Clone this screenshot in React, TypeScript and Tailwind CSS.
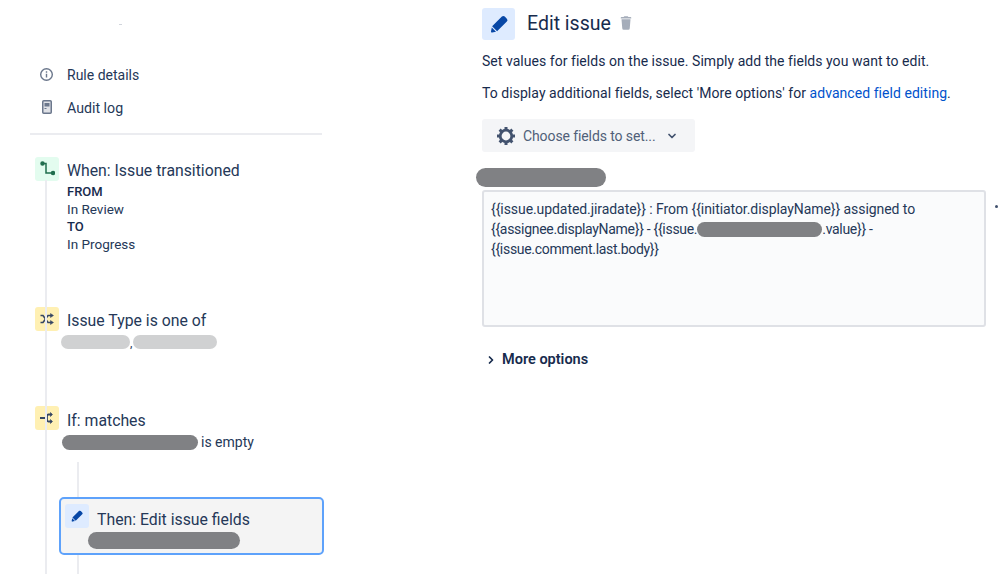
import { ChevronDown, ChevronRight } from "lucide-react";

const font = "font-['Roboto','Noto_Sans',sans-serif]";

function Pencil({ size }: { size: number }) {
  return (
    <svg width={size} height={size} viewBox="0 0 24 24" fill="#0747a6">
      <path d="M4.02 19.23a1 1 0 001.18 1.18l3.81-.78-4.21-4.21-.78 3.81zM19.844 6.707l-2.12-2.122A1.997 1.997 0 0016.308 4c-.512 0-1.024.195-1.415.585l-9.757 9.758 4.95 4.95 9.757-9.758a2 2 0 000-2.828z" />
    </svg>
  );
}

function Trash() {
  return (
    <svg width="18" height="18" viewBox="0 0 24 24" fill="#a5adba">
      <path d="M5 5a1 1 0 0 1 1-1h3a1 1 0 0 1 1-1h4a1 1 0 0 1 1 1h3a1 1 0 0 1 1 1v1H5V5zm1 2h12l-1 12a2 2 0 0 1-2 2H9a2 2 0 0 1-2-2L6 7z" />
    </svg>
  );
}

function Gear() {
  const teeth = [0, 45, 90, 135];
  return (
    <svg width="20" height="20" viewBox="0 0 20 20" fill="none" stroke="#42526e">
      <circle cx="10" cy="10" r="5.8" strokeWidth="2.8" />
      {teeth.map((a) => (
        <path key={a} d="M10 1v18" strokeWidth="3" transform={`rotate(${a} 10 10)`} strokeDasharray="3 12 3" />
      ))}
    </svg>
  );
}

function Redact({ className }: { className: string }) {
  return <span className={`inline-block rounded-full align-middle ${className}`} />;
}

function StepIcon({ bg, children }: { bg: string; children: React.ReactNode }) {
  return (
    <div className={`flex h-6 w-6 shrink-0 items-center justify-center rounded-[3px] ${bg}`}>
      {children}
    </div>
  );
}

export default function App() {
  return (
    <div className={`flex h-[584px] w-[998px] overflow-hidden bg-white text-[#253858] ${font}`}>
      {/* Left rail */}
      <div className="w-[482px] shrink-0 pl-[30px]">
        <div className="ml-[89px] mt-6 h-px w-[3px] bg-gray-300" />
        <div className="mt-[37px] flex h-6 items-center gap-[13px] pl-[9px] text-[14px]">
          <svg width="15" height="15" viewBox="0 0 16 16" fill="none" stroke="#6b778c" strokeWidth="1.5">
            <circle cx="8" cy="8" r="6.2" />
            <path d="M8 7.2v4M8 4.4v1.6" />
          </svg>
          <span className="pt-[2px]">Rule details</span>
        </div>
        <div className="mt-[9px] flex h-6 items-center gap-[15px] pl-[12px] text-[14.2px]">
          <svg width="10" height="14" viewBox="0 0 10 14">
            <rect x="0.75" y="0.75" width="8.5" height="12.5" rx="1" fill="#dfe1e6" stroke="#6b778c" strokeWidth="1.5" />
            <path d="M2.5 3h5v3.5h-5zM2.5 8h2v1h-2z" fill="#6b778c" />
          </svg>
          <span className="pt-[4px]">Audit log</span>
        </div>
        <div className="mt-[14px] h-[2px] w-[292px] bg-[#ebecf0]" />

        {/* Timeline */}
        <div className="relative mt-[22px] h-[417px]">
          <div className="flex pl-[5px]">
            <StepIcon bg="bg-[#e3fcef]">
              <svg width="16" height="16" viewBox="0 0 16 16" fill="none" stroke="#216e4e" strokeWidth="1.5">
                <path d="M3.5 2.5H7v9.5h7" />
                <circle cx="3.5" cy="2.5" r="1.5" fill="#216e4e" />
                <circle cx="14" cy="12" r="1.5" fill="#216e4e" />
              </svg>
            </StepIcon>
            <div className="pl-2 pt-[2px]">
              <div className="text-[15.8px] leading-6">When: Issue transitioned</div>
              <div className="text-[13.5px] leading-[17.5px]">
                <div className="text-[13px] font-medium text-[#172b4d]">FROM</div>
                <div>In Review</div>
                <div className="text-[13px] font-medium text-[#172b4d]">TO</div>
                <div>In Progress</div>
              </div>
            </div>
          </div>

          <div className="mt-[54px] flex pl-[5px]">
            <StepIcon bg="bg-[#fff0b3]">
              <svg width="16" height="16" viewBox="0 0 16 16" fill="none" stroke="#344563" strokeWidth="1.6">
                <path d="M1.5 4.5h2.5l5 7h3M1.5 11.5h2.5l5-7h3" />
                <path d="M11.5 2.5l3 2-3 2zM11.5 9.5l3 2-3 2z" fill="#344563" strokeWidth="0.5" />
              </svg>
            </StepIcon>
            <div className="pl-2 pt-[2px]">
              <div className="text-[15.8px] leading-6">Issue Type is one of</div>
              <div className="-ml-[6px] mt-[2px] flex h-[14px] items-end text-[12px] leading-none">
                <Redact className="h-[14px] w-[69px] bg-[#d0d1d2]" />
                <span className="w-[3px]">,</span>
                <Redact className="h-[14px] w-[84px] bg-[#d0d1d2]" />
              </div>
            </div>
          </div>

          <div className="mt-[57px] flex pl-[5px]">
            <StepIcon bg="bg-[#fff0b3]">
              <svg width="16" height="16" viewBox="0 0 16 16" fill="none" stroke="#344563" strokeWidth="1.8">
                <path d="M1 8h6M12 4.5H9.5A1.5 1.5 0 0 0 8 6v4a1.5 1.5 0 0 0 1.5 1.5H12" />
                <path d="M11.5 2.5l2 2-2 2zM11.5 9.5l2 2-2 2z" fill="#344563" strokeWidth="0.6" />
              </svg>
            </StepIcon>
            <div className="pl-2 pt-[3px]">
              <div className="text-[15.8px] leading-6">If: matches</div>
              <div className="-ml-[5px] flex h-[19px] items-center gap-[3px] text-[14px]">
                <Redact className="h-[15px] w-[136px] bg-[#808184]" />
                <span>is empty</span>
              </div>
            </div>
          </div>

          <div className="relative z-10 ml-[29px] mt-[45px] h-[58px] w-[265px] rounded-[5px] border-2 border-[#5ea2fb] bg-[#f4f4f4] pl-[4px] pt-[5px]">
            <div className="flex">
              <StepIcon bg="bg-[#deebff]">
                <Pencil size={16} />
              </StepIcon>
              <div className="pl-2 pt-[4px] text-[15.8px] leading-6">Then: Edit issue fields</div>
            </div>
            <Redact className="-mt-[8px] ml-[23px] block h-[17px] w-[152px] bg-[#808184]" />
          </div>

          {/* Connector lines behind the steps */}
          <div className="absolute left-[15px] top-[23px] bottom-0 w-[2px] bg-[#ebecf0]" />
          <div className="absolute left-[47px] top-[305px] bottom-0 w-[2px] bg-[#ebecf0]" />
        </div>
      </div>

      {/* Right panel */}
      <div className="relative w-[504px] shrink-0 pt-2">
        <div className="flex items-center">
          <div className="flex h-[32px] w-[33px] items-center justify-center rounded-[3px] bg-[#deebff]">
            <Pencil size={24} />
          </div>
          <h1 className="ml-3 text-[19.5px] leading-8 text-[#172b4d]">Edit issue</h1>
          <span className="ml-[6px] -mt-[3px]"><Trash /></span>
        </div>
        <p className="mt-[11px] text-[14px] leading-5 tracking-[0.04px] text-[#172b4d]">
          Set values for fields on the issue. Simply add the fields you want to edit.
        </p>
        <p className="mt-3 text-[14px] leading-5 tracking-[0.05px] text-[#172b4d]">
          To display additional fields, select 'More options' for{" "}
          <a className="text-[#0052cc]">advanced field editing</a>.
        </p>
        <button className="mt-[16px] flex h-[33px] w-[213px] items-center rounded-[3px] bg-[#f4f5f7] pl-[14px] text-[14px] tracking-[-0.1px] text-[#505f79]">
          <Gear />
          <span className="ml-[7px] pt-[2px]">Choose fields to set...</span>
          <ChevronDown size={12} strokeWidth={3.5} color="#42526e" className="ml-[10px]" />
        </button>
        <Redact className="-ml-[6px] mt-[16px] block h-[19px] w-[130px] bg-[#808184]" />
        <div className="mt-[3px] h-[137px] w-[504px] rounded-[3px] border-2 border-[#dfe1e6] bg-[#fafbfc] px-[7px] py-[7px] text-[14px] leading-5">
          <div className="tracking-[-0.07px]">{"{{issue.updated.jiradate}} : From {{initiator.displayName}} assigned to"}</div>
          <div className="flex items-center tracking-[-0.3px]">
            <span>{"{{assignee.displayName}} - {{issue."}</span>
            <Redact className="h-[15px] w-[125px] bg-[#808184]" />
            <span>{".value}} -"}</span>
          </div>
          <div className="tracking-[-0.3px]">{"{{issue.comment.last.body}}"}</div>
        </div>
        <div className="mt-[23px] flex h-5 items-center text-[14.5px] font-semibold text-[#172b4d]">
          <ChevronRight size={12} strokeWidth={3.5} className="ml-[3px] mr-[5px]" />
          <span>More options</span>
        </div>
        <div className="absolute right-[-12px] top-[205px] h-[3px] w-[3px] rounded-full bg-[#42526e]" />
      </div>
    </div>
  );
}
